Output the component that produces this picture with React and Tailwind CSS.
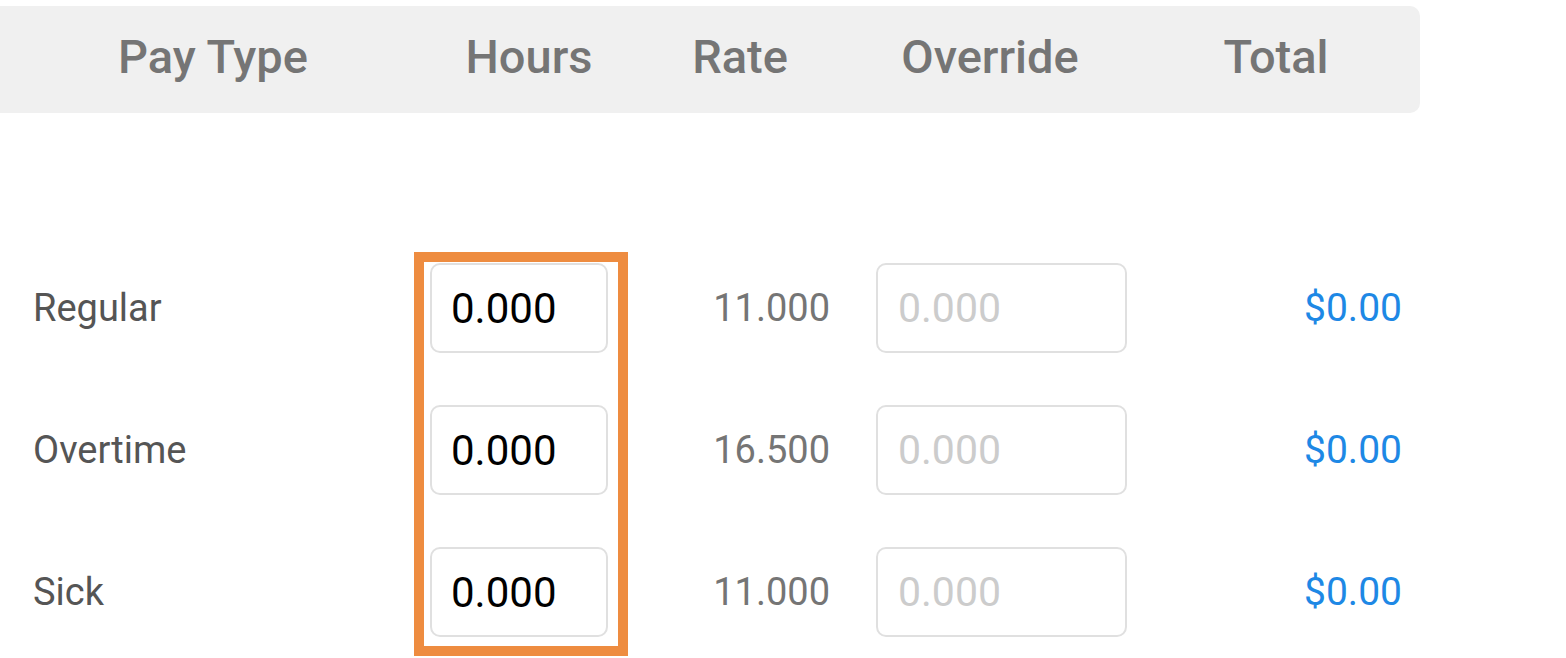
import React from "react";

const rows = [
  { type: "Regular", rate: "11.000" },
  { type: "Overtime", rate: "16.500" },
  { type: "Sick", rate: "11.000" },
];

const cols = "grid grid-cols-[426px_206px_216px_284px_288px]";

export default function App() {
  return (
    <div
      className="relative w-[1566px] h-[658px] overflow-hidden bg-white pt-[6px]"
      style={{ fontFamily: "Roboto, 'Noto Sans', sans-serif" }}
    >
      <div className={`${cols} w-[1420px] h-[107px] items-center pb-[6px] bg-[#f0f0f0] rounded-r-[10px] text-[47px] font-medium text-[#757575] leading-none`}>
        <div className="text-center">Pay Type</div>
        <div className="text-center">Hours</div>
        <div className="text-center">Rate</div>
        <div className="text-center">Override</div>
        <div className="text-center">Total</div>
      </div>

      <div className="mt-[150px] flex flex-col gap-[52px] w-[1420px]">
        {rows.map((r) => (
          <div key={r.type} className={`${cols} h-[90px] items-center`}>
            <div className="pl-[33px] text-[38px] text-[#555555] leading-none">{r.type}</div>
            <div className="pl-[4px]">
              <input
                readOnly
                defaultValue="0.000"
                className="w-[178px] h-[90px] rounded-[10px] border-2 border-[#e0e0e0] pl-[19px] text-[42px] text-black outline-none bg-white"
              />
            </div>
            <div className="text-right pr-[18px] text-[38px] text-[#757575] leading-none">{r.rate}</div>
            <div className="pl-[28px]">
              <input
                readOnly
                placeholder="0.000"
                className="w-[251px] h-[90px] rounded-[10px] border-2 border-[#e0e0e0] pl-[20px] text-[41px] text-black placeholder:text-[#cccccc] outline-none bg-white"
              />
            </div>
            <div className="text-right pr-[18px] text-[39px] text-[#1e88e5] leading-none">$0.00</div>
          </div>
        ))}
      </div>

      <div className="absolute left-[414px] top-[252px] w-[214px] h-[404px] border-[10px] border-[#ee8c40] pointer-events-none" />
    </div>
  );
}
